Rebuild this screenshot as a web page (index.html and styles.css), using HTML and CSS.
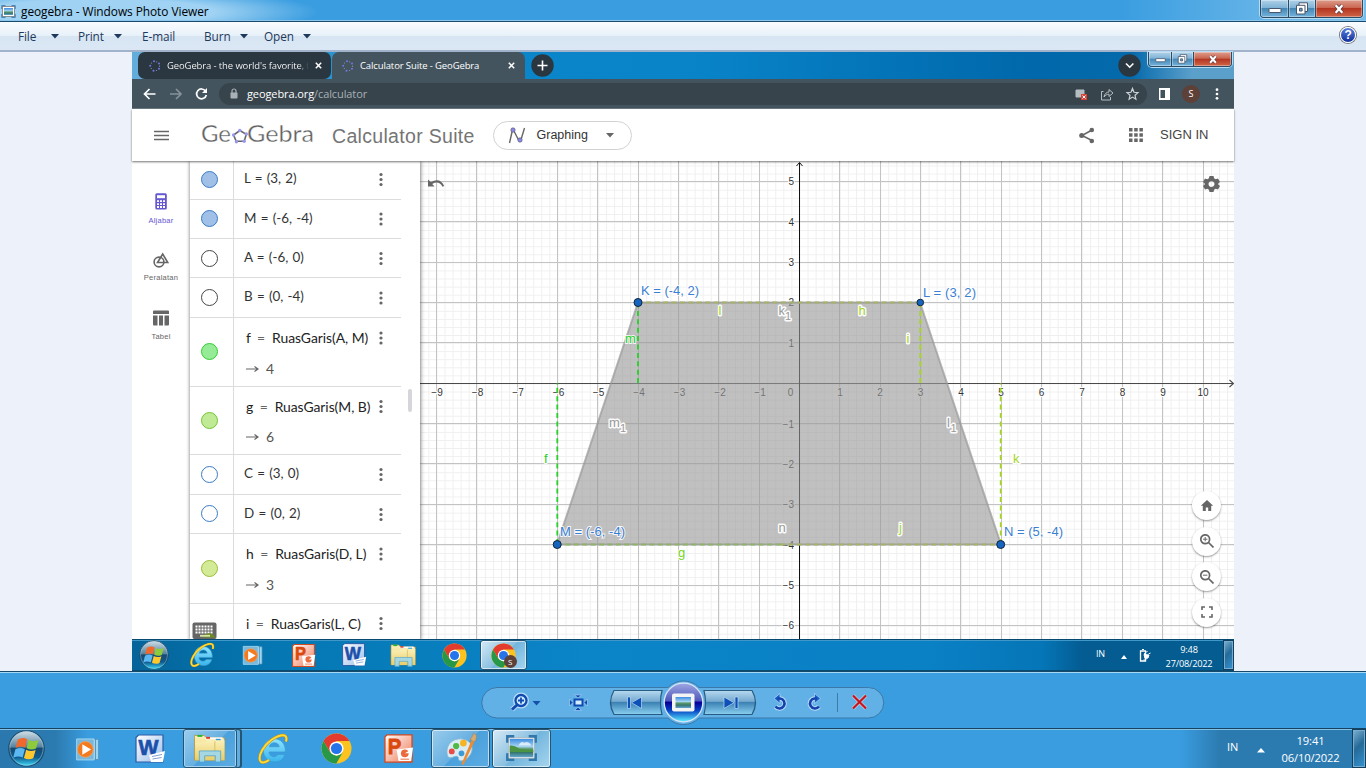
FILE: index.html
```html
<!DOCTYPE html>
<html lang="en">
<head>
<meta charset="utf-8">
<title>geogebra - Windows Photo Viewer</title>
<link rel="stylesheet" href="styles.css">
</head>
<body>
<svg class="defs" aria-hidden="true">
  <defs>
    <linearGradient id="orb" x1="0" y1="0" x2="0" y2="1"><stop offset="0" stop-color="#d5e1e8"/><stop offset=".45" stop-color="#58849f"/><stop offset=".5" stop-color="#164a72"/><stop offset=".75" stop-color="#0e5c90"/><stop offset="1" stop-color="#3fe0ff"/></linearGradient>
    <linearGradient id="folder" x1="0" y1="0" x2="0" y2="1"><stop offset="0" stop-color="#fbf0b8"/><stop offset="1" stop-color="#e9cd68"/></linearGradient>
    <linearGradient id="ieblue" x1="0" y1="0" x2="0" y2="1"><stop offset="0" stop-color="#8fe4ff"/><stop offset="1" stop-color="#38b4ec"/></linearGradient>
    <linearGradient id="sky" x1="0" y1="0" x2="0" y2="1"><stop offset="0" stop-color="#3d8ce0"/><stop offset=".42" stop-color="#a5d4f2"/><stop offset=".55" stop-color="#5d9a6a"/><stop offset=".75" stop-color="#37766e"/><stop offset="1" stop-color="#62a6d4"/></linearGradient>
    <linearGradient id="docw" x1="0" y1="0" x2="1" y2="1"><stop offset="0" stop-color="#fff"/><stop offset="1" stop-color="#9bbde9"/></linearGradient>
    <linearGradient id="docp" x1="0" y1="0" x2="1" y2="1"><stop offset="0" stop-color="#fff"/><stop offset="1" stop-color="#ef7a55"/></linearGradient>
    <linearGradient id="play" x1="0" y1="0" x2="0" y2="1"><stop offset="0" stop-color="#9ea8e2"/><stop offset=".45" stop-color="#5059bd"/><stop offset=".5" stop-color="#08009a"/><stop offset=".7" stop-color="#0540c4"/><stop offset="1" stop-color="#5ff2ff"/></linearGradient>
    <linearGradient id="navbtn" x1="0" y1="0" x2="0" y2="1"><stop offset="0" stop-color="#b6d9f0"/><stop offset=".45" stop-color="#76aacf"/><stop offset=".5" stop-color="#3d82b4"/><stop offset="1" stop-color="#8ad0f0"/></linearGradient>
  </defs>
</svg>
<svg class="symbols" aria-hidden="true">
  <symbol id="start" viewBox="0 0 36 36">
    <circle cx="18" cy="18" r="17.3" fill="url(#orb)" stroke="#1d4c6c"/><circle cx="18" cy="18" r="16.2" fill="none" stroke="#a9d3e8" stroke-opacity=".6" stroke-width=".8"/>
    <path d="M9.5 9.3q5-3 9.2-.3l-2 8.2q-4.500-2.300-9.200.2z" fill="#f0682b"/><path d="M20 9.600q4.500 2.600 9.600.1l-2.300 8.200q-4.700 2.200-9.100-.2z" fill="#8dcb3c"/>
    <path d="M7.200 18.800q4.600-2.500 9.200-.1l-2.200 8.100q-4.300-2.200-9.100.2z" fill="#5cb8f0"/><path d="M17.700 19.200q4.500 2.400 9.200.2l-2.300 8.100q-4.700 2.200-9.100-.3z" fill="#fdc82e"/>
  </symbol>
  <symbol id="wmp" viewBox="0 0 32 32">
    <path d="M21 5h7v23h-7z" fill="#9ed6ef" stroke="#5595bd"/><path d="M24.500 5v23" stroke="#4a86b0"/>
    <path d="M3 4.500h20v24H3z" fill="#78b8dd" stroke="#a8dcf3"/><circle cx="13" cy="16.500" r="9" fill="#f47a20" stroke="#f9a85f" stroke-width=".8"/><path d="M9.500 10.500v12l10-6z" fill="#fff"/>
  </symbol>
  <symbol id="word" viewBox="0 0 32 32">
    <path d="M2 4.500l2.500-2.500H29v27H2z" fill="url(#docw)" stroke="#2c5aa6" stroke-width="1.200"/>
    <text x="4.500" y="22" class="ico-letter" font-size="22" textLength="20" lengthAdjust="spacingAndGlyphs" fill="#1c50aa" stroke="#1c50aa" stroke-width=".7">W</text>
    <path d="M15 22l16-4-2 11H17z" fill="#fff"/><path d="M18 23.500l10-2M18.500 26l9-1.500" stroke="#7f9fd2"/>
  </symbol>
  <symbol id="ppt" viewBox="0 0 32 32">
    <path d="M2 4l2-2H30v28H2z" fill="url(#docp)" stroke="#d24a22" stroke-width="1.400"/>
    <text x="5" y="22" class="ico-letter" font-size="23" textLength="14" lengthAdjust="spacingAndGlyphs" fill="#d9480f" stroke="#d9480f" stroke-width=".8">P</text>
    <path d="M14 17l17-2-2 14H16z" fill="#fff"/><circle cx="22.500" cy="21" r="4" fill="#ea6a3d"/><path d="M22.500 21h5v-3z" fill="#fff"/><path d="M18 27h9" stroke="#e7683c"/>
  </symbol>
  <symbol id="explorer" viewBox="0 0 34 32">
    <path d="M1 5V2.500h10l2 2.500h19v23H1z" fill="url(#folder)" stroke="#b79337" stroke-width=".8"/><path d="M4 2h5v2H4z" fill="#20b53b"/><path d="M12 4.500h18v2H12z" fill="#fff"/><path d="M13 4h4v2h-4z" fill="#dd3b28"/><path d="M23 6h5v2h-5z" fill="#2c9ae0"/>
    <path d="M2 9.500h10l2-2h18V28H2z" fill="url(#folder)"/><path d="M22 8.500V28" stroke="#d9bf63"/>
    <path d="M6 18.500h22V30h-5.500v-6.500h-11V30H6z" fill="#9dd7ee" stroke="#4fa3cc" stroke-width=".8" fill-opacity=".9"/>
  </symbol>
  <symbol id="ie" viewBox="0 0 32 32">
    <path d="M27.400 19H11c.3 5.200 6.800 6 8.800 2.600h6.800C24.500 32.500 5 32 5.300 16.500 5.600 1.500 28.500 1.800 27.400 19z M11.300 13.800h9.900c-.8-5.300-8.700-5.300-9.900 0z" fill="url(#ieblue)" fill-rule="evenodd" stroke="#3a9ad0" stroke-width=".7"/>
    <path d="M28 8.500C30.500-.5 22 1.500 14 6.500 6 12 0 22 2 27.500c1.300 3.200 5.500 2 9-.5" fill="none" stroke="#c59111" stroke-width="2.800"/><path d="M28 8.500C30.500-.5 22 1.500 14 6.500 6 12 0 22 2 27.500c1.300 3.200 5.500 2 9-.5" fill="none" stroke="#fddc38" stroke-width="1.900"/>
  </symbol>
  <symbol id="chrome" viewBox="0 0 32 32">
    <circle cx="16" cy="16" r="15.500" fill="#fcc31e"/>
    <path d="M2.600 8.300A15.500 15.500 0 0 1 29.400 8.300H16v4L9.500 20z" fill="#e33b2e"/><path d="M2.600 8.300L9.300 19.800 16 23.700l6.400-3.500-6.600 11.300A15.500 15.500 0 0 1 2.600 8.300z" fill="#279847"/>
    <circle cx="16" cy="16" r="7.300" fill="#fff"/><circle cx="16" cy="16" r="5.800" fill="#2674ea"/>
  </symbol>
  <symbol id="paint" viewBox="0 0 34 34">
    <path d="M3 20C3 9 15 4 24 9c7 4 6 12 1 17-3 4-10 5-10 2s-1-4-6-2-6-2-6-6z" fill="#d8ecf5" stroke="#86b7d2"/><circle cx="8" cy="20" r="3" fill="#e84b43"/><circle cx="12.500" cy="14.500" r="3.200" fill="#4fb846"/><circle cx="20" cy="11.500" r="3.400" fill="#f7b321"/><circle cx="18" cy="22" r="3" fill="#3d9ad3"/>
    <path d="M18 33L29 7l3 1.500L20 34z" fill="#ee8b31"/><path d="M27.500 8c0-3 2-2 3-7l3 2.500c0 4-1 6-3 6.500z" fill="#d7aa72" stroke="#a97a42" stroke-width=".5"/>
  </symbol>
  <symbol id="viewer" viewBox="0 0 32 28">
    <path d="M1.500 8V1.500h7M23.500 1.500h7V8M30.500 19v6.500h-7M8.500 25.500h-7V19" fill="none" stroke="#2f78ae" stroke-width="3"/><path d="M2.800 3h26.400v21H2.800z" fill="#fff" stroke="#b0aca5" stroke-width=".7"/><path d="M3.800 4h24.400v19H3.800z" fill="url(#sky)"/><path d="M14 9q2-3 5-1 3-2 6 1l1 2H13z" fill="#fff" fill-opacity=".7"/><path d="M3.800 11q4.500-.5 10.500 3.500l13.900 1v2H3.800z" fill="#4b9443"/>
  </symbol>
  <symbol id="tri" viewBox="0 0 8 5"><path d="M0 0h8L4 4.500z" fill="#1e395b"/></symbol>
  <symbol id="ring" viewBox="0 0 12 12"><g fill="#7873e6"><circle cx="5" cy="1.300" r="1"/><circle cx="10" cy="3.500" r="1"/><circle cx="10" cy="8.800" r="1"/><circle cx="4.500" cy="10.800" r="1"/><circle cx="1.200" cy="5.800" r="1"/></g><g fill="#8e95a8"><circle cx="7.700" cy="1.800" r=".6"/><circle cx="10.500" cy="6.200" r=".6"/><circle cx="7.500" cy="10.500" r=".6"/><circle cx="2.300" cy="8.500" r=".6"/><circle cx="2.500" cy="3" r=".6"/></g></symbol>
  <symbol id="dots" viewBox="0 0 4 14"><circle cx="2" cy="2" r="1.600"/><circle cx="2" cy="7" r="1.600"/><circle cx="2" cy="12" r="1.600"/></symbol>
  <symbol id="min" viewBox="0 0 14 10"><rect x="1" y="4.500" width="12" height="4" rx=".6" fill="#fff" stroke="#46566b"/></symbol>
  <symbol id="restore" viewBox="0 0 14 13"><path d="M4 .8h8.500v8.700H4z" fill="#fff" stroke="#46566b"/><path d="M1.500 3.300H10V12H1.500z" fill="#fff" stroke="#46566b"/><path d="M4.500 6.300h2.600V9H4.500z" fill="#6fa0c4" stroke="#46566b"/></symbol>
  <symbol id="close" viewBox="0 0 14 12"><path d="M3 1.500l8 9M11 1.500l-8 9" stroke="#5a3b42" stroke-width="4.600"/><path d="M3 1.500l8 9M11 1.500l-8 9" stroke="#fff" stroke-width="2.800"/></symbol>
</svg>

<header class="titlebar">
  <svg class="title-icon" width="15" height="13"><path d="M1 4V.8h3.500M10.500.8H14V4M14 9v3.200h-3.500M4.500 12.200H1V9" fill="none" stroke="#2b6ea5" stroke-width="1.200"/><path d="M1.500 1.500h12v10h-12z" fill="#fff" stroke="#777" stroke-width=".8"/><path d="M3 3h9v7H3z" fill="url(#sky)"/></svg>
  <span class="title-text">geogebra - Windows Photo Viewer</span>
  <div class="winctl"><i class="wb wb-a"><svg width="14" height="10"><use href="#min"/></svg></i><i class="wb wb-b"><svg width="14" height="13"><use href="#restore"/></svg></i><i class="wb wb-c"><svg width="12" height="10"><use href="#close"/></svg></i></div>
</header>

<nav class="menubar">
  <span class="mi file">File<svg width="8" height="5"><use href="#tri"/></svg></span>
  <span class="mi print">Print<svg width="8" height="5"><use href="#tri"/></svg></span>
  <span class="mi mail">E-mail</span>
  <span class="mi burn">Burn<svg width="8" height="5"><use href="#tri"/></svg></span>
  <span class="mi open">Open<svg width="8" height="5"><use href="#tri"/></svg></span>
  <span class="help">?</span>
</nav>

<main class="stage">
  <section class="photo">
    <div class="tabs">
      <div class="tab tab-1"><svg width="12" height="12"><use href="#ring"/></svg><span class="tt t1">GeoGebra - the world's favorite, f</span><svg class="tx" width="7" height="7"><path d="M.8.8l5.400 5.400M6.200.8L.8 6.200"/></svg></div>
      <div class="tab tab-2"><svg width="12" height="12"><use href="#ring"/></svg><span class="tt t2">Calculator Suite - GeoGebra</span><svg class="tx" width="7" height="7"><path d="M.8.8l5.400 5.400M6.200.8L.8 6.200"/></svg></div>
      <svg class="plus" width="23" height="23"><circle cx="11.500" cy="11.500" r="11.200" fill="#2b3740"/><path d="M6.500 11.500h10M11.500 6.500v10" stroke="#fff" stroke-width="1.600"/></svg>
      <svg class="chev" width="23" height="23"><circle cx="11.500" cy="11.500" r="11.200" fill="#2b3740"/><path d="M8 9.500l3.700 3.700 3.700-3.700" fill="none" stroke="#fff" stroke-width="1.600"/></svg>
      <div class="winctl small"><i class="wb wb-a"><svg width="11" height="8"><use href="#min"/></svg></i><i class="wb wb-b"><svg width="11" height="10"><use href="#restore"/></svg></i><i class="wb wb-c"><svg width="10" height="9"><use href="#close"/></svg></i></div>
    </div>

    <div class="toolbar">
      <svg class="navs" width="86" height="30" fill="none" stroke-width="1.700"><path d="M23.500 15H13M17.500 10l-5 5 5 5" stroke="#fff"/><path d="M38 15h10.500M44 10l5 5-5 5" stroke="#85929a"/><path d="M73.500 12a4.900 4.900 0 1 0 .8 4" stroke="#fff"/><path d="M75 9v5h-5z" fill="#fff"/></svg>
      <div class="address">
        <svg width="8" height="11"><path d="M2 5V3a2 2 0 0 1 4 0v2" fill="none" stroke="#a9b1b6" stroke-width="1.200"/><rect x=".5" y="4.500" width="7" height="6" rx=".8" fill="#a9b1b6"/></svg>
        <span class="url">geogebra.org<span>/calculator</span></span>
        <svg class="addr-icons" width="66" height="16" fill="none" stroke="#b4bdc2"><path d="M1 4h8v7H1z" fill="#b4bdc2"/><rect x="6" y="8" width="6" height="6" fill="#d94235" stroke="none"/><path d="M7.500 9.500l3 3M10.500 9.500l-3 3" stroke="#fff"/><path d="M28.500 5.500h-2v8.500h9v-3M29 11c.5-3.500 3-5 5-5V3.500l4 3.500-4 3.500V8.200c-2 0-3.500.8-5 2.800z"/><path d="M57.500 2.500l1.500 3.800 4 .3-3 2.700.9 4-3.400-2.200-3.400 2.200.9-4-3-2.700 4-.3z" stroke-width="1.200" stroke="#ccd3d6"/></svg>
      </div>
      <svg class="panel-ico" width="11" height="12"><path d="M0 0h11v12H0z" fill="#fff"/><path d="M1.500 2h4.500v8H1.500z" fill="#43535d"/></svg>
      <span class="avatar">S</span>
      <svg class="kebab-w" width="4" height="12" fill="#fff"><use href="#dots"/></svg>
    </div>

    <div class="apphead">
      <svg class="burger" width="15" height="11"><path d="M0 1.500h15M0 5.500h15M0 9.500h15" stroke="#666" stroke-width="1.300"/></svg>
      <svg class="logo" width="114" height="36"><g class="logo-text"><text x="0" y="25" textLength="30" lengthAdjust="spacingAndGlyphs">Ge</text><text x="46" y="25" textLength="67" lengthAdjust="spacingAndGlyphs">Gebra</text></g><path d="M38.800 13.500L45.300 17.300 43.200 24.200H35.200L32.600 18z" fill="none" stroke="#666" stroke-width="1.600"/><g fill="#9a96f2"><circle cx="38.800" cy="13.500" r="1.700"/><circle cx="45.300" cy="17" r="1.700"/><circle cx="43.200" cy="24.200" r="1.700"/><circle cx="35.400" cy="24.700" r="1.700"/><circle cx="32.600" cy="18" r="1.700"/></g></svg>
      <span class="suite">Calculator Suite</span>
      <span class="pill"><svg width="18" height="17"><path d="M1.500 16L4 5Q5 1 6.500 5l3.500 7q2 4 3.500-1L16.500 1" fill="none" stroke="#666" stroke-width="1.400"/><circle cx="5" cy="3" r="2.200" fill="#8a87f2" stroke="#555" stroke-width=".6"/><circle cx="12" cy="13" r="2.200" fill="#8a87f2" stroke="#555" stroke-width=".6"/></svg><b>Graphing</b><svg class="car" width="8" height="5"><path d="M0 0h8L4 4.500z" fill="#666"/></svg></span>
      <svg class="share" width="16" height="17" fill="#666"><path d="M13 3L3 8.500l10 5" fill="none" stroke="#666" stroke-width="1.500"/><circle cx="12.800" cy="3" r="2.300"/><circle cx="2.700" cy="8.500" r="2.500"/><circle cx="12.800" cy="14" r="2.300"/></svg>
      <svg class="apps" width="14" height="14"><path d="M0 1.800h14M0 7h14M0 12.200h14" stroke="#666" stroke-width="3.400" stroke-dasharray="3.500 1.700"/></svg>
      <span class="signin">SIGN IN</span>
    </div>

    <div class="work">
      <aside class="rail">
        <div class="ri active"><svg width="12" height="17"><rect x=".3" y=".3" width="11.500" height="16.200" rx="1.500" fill="#6557d2"/><path d="M2 2.200h8v3H2z" fill="#fff"/><path d="M2 8.200h8M2 11.200h8M2 14h8" stroke="#fff" stroke-width="1.800" stroke-dasharray="2 1"/></svg><span>Aljabar</span></div>
        <div class="ri"><svg width="16" height="16" fill="none" stroke="#666" stroke-width="1.600"><circle cx="6" cy="10" r="4.900"/><path d="M9.700 2L4.500 10.500h10.300z"/></svg><span>Peralatan</span></div>
        <div class="ri"><svg width="16" height="16" fill="#666"><path d="M0 1.500Q0 .5 1 .5h14q1 0 1 1V4H0zM0 5.500h4.500v10H1q-1 0-1-1zM6 5.500h4v10H6zM11.500 5.500H16v9q0 1-1 1h-3.500z"/></svg><span>Tabel</span></div>
      </aside>
      <section class="algebra">
        <div class="row first"><div class="mb"><i class="m blue"></i></div><p>L = (3, 2)</p></div>
        <div class="row"><div class="mb"><i class="m blue"></i></div><p>M = (-6, -4)</p></div>
        <div class="row"><div class="mb"><i class="m"></i></div><p>A = (-6, 0)</p></div>
        <div class="row"><div class="mb"><i class="m"></i></div><p>B = (0, -4)</p></div>
        <div class="row tall"><div class="mb"><i class="m g1"></i></div><div class="def"><p>f <u>=</u> RuasGaris(A, M)</p><p class="res"><svg width="13" height="6"><path d="M0 3h11M8.500.5L12 3 8.500 5.500" fill="none" stroke="#666" stroke-width="1.200"/></svg>4</p></div></div>
        <div class="row tall"><div class="mb"><i class="m g2"></i></div><div class="def"><p>g <u>=</u> RuasGaris(M, B)</p><p class="res"><svg width="13" height="6"><path d="M0 3h11M8.500.5L12 3 8.500 5.500" fill="none" stroke="#666" stroke-width="1.200"/></svg>6</p></div></div>
        <div class="row"><div class="mb"><i class="m ob"></i></div><p>C = (3, 0)</p></div>
        <div class="row"><div class="mb"><i class="m ob"></i></div><p>D = (0, 2)</p></div>
        <div class="row tall h"><div class="mb"><i class="m g3"></i></div><div class="def"><p>h <u>=</u> RuasGaris(D, L)</p><p class="res"><svg width="13" height="6"><path d="M0 3h11M8.500.5L12 3 8.500 5.500" fill="none" stroke="#666" stroke-width="1.200"/></svg>3</p></div></div>
        <div class="row last"><div class="mb"></div><div class="def"><p>i <u>=</u> RuasGaris(L, C)</p></div></div>
        <svg class="kebabs" width="4" height="478" viewBox="379 161 4 478" fill="#666"><use href="#dots" x="379" y="172.500" width="4" height="14"/><use href="#dots" x="379" y="212" width="4" height="14"/><use href="#dots" x="379" y="251.500" width="4" height="14"/><use href="#dots" x="379" y="291" width="4" height="14"/><use href="#dots" x="379" y="331" width="4" height="14"/><use href="#dots" x="379" y="399.500" width="4" height="14"/><use href="#dots" x="379" y="467.500" width="4" height="14"/><use href="#dots" x="379" y="507.500" width="4" height="14"/><use href="#dots" x="379" y="547" width="4" height="14"/><use href="#dots" x="379" y="616.500" width="4" height="14"/></svg>
        <i class="thumb"></i>
        <svg class="keyboard" width="25" height="17"><rect x=".5" y=".5" width="24" height="16.500" rx="2" fill="#666"/><path d="M3.500 4.500h18M3.500 7.500h18M3.500 10.500h18" stroke="#fff" stroke-width="2" stroke-dasharray="2 1"/><path d="M10 15.500q7-8.500 14 0z" fill="#6d8c28"/><path d="M8 13.800h10" stroke="#d5e5a5" stroke-width="1.800"/></svg>
      </section>

      <div class="graph">
        <svg class="plot" width="814" height="478" viewBox="420 161 814 478">
          <defs><pattern id="minor" width="8.068" height="8.072" x="799.500" y="383.500" patternUnits="userSpaceOnUse"><path d="M0 .5h8.100M.5 0v8.100" stroke="#efefef" fill="none"/></pattern></defs>
          <path d="M420 161h814v478H420z" fill="#fff"/><path d="M420 161h814v478H420z" fill="url(#minor)"/>
          <path d="M436.500 161v478M476.500 161v478M517.500 161v478M557.500 161v478M597.500 161v478M638.500 161v478M678.500 161v478M718.500 161v478M759.500 161v478M839.500 161v478M880.500 161v478M920.500 161v478M960.500 161v478M1001.500 161v478M1041.500 161v478M1081.500 161v478M1122.500 161v478M1162.500 161v478M1203.500 161v478M420 181.500h814M420 221.500h814M420 262.500h814M420 302.500h814M420 342.500h814M420 423.500h814M420 463.500h814M420 504.500h814M420 544.500h814M420 585.500h814M420 625.500h814" stroke="#c3c3c3"/>
          <path d="M420 383.500h813M1229.500 380l4 3.500-4 3.500" stroke="#4a4a4a" fill="none" stroke-width="1.100"/><path d="M799.500 639V163M796.500 166l3-3.500 3 3.500" stroke="#111" fill="none"/>
          <g class="ticks" text-anchor="middle">
            <text x="437" y="396">−9</text><text x="477.500" y="396">−8</text><text x="518" y="396">−7</text><text x="558.500" y="396">−6</text><text x="598.500" y="396">−5</text><text x="639" y="396">−4</text><text x="679.500" y="396">−3</text><text x="720" y="396">−2</text><text x="760" y="396">−1</text><text x="790.500" y="396">0</text><text x="840" y="396">1</text><text x="880" y="396">2</text><text x="920.500" y="396">3</text><text x="961" y="396">4</text><text x="1001" y="396">5</text><text x="1041.500" y="396">6</text><text x="1082" y="396">7</text><text x="1122.500" y="396">8</text><text x="1163" y="396">9</text><text x="1203" y="396">10</text>
          </g>
          <g class="ticks" text-anchor="end"><text x="794" y="185">5</text><text x="794" y="225.500">4</text><text x="794" y="266">3</text><text x="794" y="306">2</text><text x="794" y="346.500">1</text><text x="794" y="427.500">−1</text><text x="794" y="467.500">−2</text><text x="794" y="508">−3</text><text x="794" y="548.500">−4</text><text x="794" y="588.500">−5</text><text x="794" y="629">−6</text></g>
          <path d="M638 302.500H920L1001 544.500H557z" fill="#999" fill-opacity=".62" stroke="#999" stroke-opacity=".7" stroke-width="2"/>
          <g fill="none" stroke-width="1.800" stroke-dasharray="5 3.400"><path d="M557.300 544V383.500M638 302.500v81" stroke="#28cf28"/><path d="M920.300 302.500v81M1000.700 544V383.500" stroke="#a5d51c"/><path d="M638 302.500h282M780 544.500h220" stroke="#a6b268"/><path d="M557 544.500h224" stroke="#8fb467"/></g>
          <g fill="#1565c0" stroke="#10233b"><circle cx="638" cy="302.500" r="4"/><circle cx="920.300" cy="302.500" r="3.300"/><circle cx="557.200" cy="544.500" r="4"/><circle cx="1000.700" cy="544.500" r="4"/></g>
          <g class="lab" fill="#3b7fd2"><text x="641" y="294.500" textLength="58">K = (-4, 2)</text><text x="923" y="296.500" textLength="53">L = (3, 2)</text><text x="560" y="535.800" textLength="65">M = (-6, -4)</text><text x="1004" y="535.800" textLength="59">N = (5, -4)</text></g>
          <g class="lab" fill="#28cf28"><text x="544" y="463">f</text><text x="625" y="342.500">m</text><text x="678" y="556.500" fill="#74d51e">g</text></g>
          <g class="lab halo" fill="#a5d51c"><text x="718.500" y="315">l</text><text x="858.500" y="315">h</text><text x="906.500" y="342.500">i</text><text x="1013" y="463">k</text><text x="899" y="531.500">j</text></g>
          <g class="lab halo" fill="#999"><text x="778.500" y="315">k</text><text x="785" y="320" font-size="11">1</text><text x="609" y="427">m</text><text x="620" y="432" font-size="11">1</text><text x="947" y="427">l</text><text x="950.500" y="432" font-size="11">1</text><text x="778.500" y="531.500">n</text></g>
          <path d="M428 179.500v7h6.500l-2.300-2.400q6.500-4 10.300 2.700l1.700-.7q-4-9-13.400-4z" fill="#666"/>
          <path d="M1209.500 176h4l.6 2.300 1.600.9 2.300-.7 2 3.400-1.700 1.600v1l1.700 1.600-2 3.400-2.300-.7-1.600.9-.6 2.300h-4l-.6-2.300-1.600-.9-2.300.7-2-3.400 1.700-1.600v-1l-1.700-1.600 2-3.400 2.300.7 1.600-.9zM1211.500 181a3 3 0 1 0 .01 0z" fill="#666" fill-rule="evenodd"/>
        </svg>
        <div class="fabs">
          <span><svg width="14" height="14"><path d="M7 1L.8 6.800h2V12h3V8.500h2.400V12h3V6.800h2z" fill="#666"/></svg></span>
          <span><svg width="14" height="14" fill="none" stroke="#666" stroke-width="1.700"><circle cx="5.200" cy="5.200" r="4.400"/><path d="M8.500 8.500l5 5"/><path d="M3 5.200h4.400M5.200 3v4.400" stroke-width="1"/></svg></span>
          <span><svg width="14" height="14" fill="none" stroke="#666" stroke-width="1.700"><circle cx="5.200" cy="5.200" r="4.400"/><path d="M8.500 8.500l5 5"/><path d="M3 5.200h4.400" stroke-width="1"/></svg></span>
          <span><svg width="12" height="12" fill="none" stroke="#666" stroke-width="1.600"><path d="M1 4V1h3M8 1h3v3M11 8v3H8M4 11H1V8"/></svg></span>
        </div>
      </div>
    </div>

    <div class="task inner">
      <div class="tc st"><svg width="30" height="30"><use href="#start"/></svg></div>
      <div class="tc"><svg width="26" height="26"><use href="#ie"/></svg></div>
      <div class="tc"><svg width="24" height="24"><use href="#wmp"/></svg></div>
      <div class="tc"><svg width="25" height="25"><use href="#ppt"/></svg></div>
      <div class="tc"><svg width="26" height="26"><use href="#word"/></svg></div>
      <div class="tc"><svg width="27" height="25"><use href="#explorer"/></svg></div>
      <div class="tc"><svg width="25" height="25"><use href="#chrome"/></svg></div>
      <div class="tc on"><svg width="25" height="25"><use href="#chrome"/></svg><em>S</em></div>
      <div class="tray"><span class="lang">IN</span><svg class="up" width="6" height="4"><path d="M0 4h6L3 0z" fill="#fff"/></svg><svg class="plug" width="12" height="13"><path d="M1.500 2h5v10h-5z" fill="none" stroke="#fff" stroke-width="1.300"/><path d="M3 .5h2" stroke="#fff"/><path d="M5 5l2-1.500L8.500 2M9.500 5L11.500 4M5 5.500l5 .5-1 3-3 .5z" fill="#fff" stroke="#fff"/><path d="M7 9.500q.5 2.500-2.500 1.500" fill="none" stroke="#fff"/></svg><span class="clock">9:48<br>27/08/2022</span><i class="peek"></i></div>
    </div>
  </section>
</main>

<section class="controls">
  <svg width="404" height="50" viewBox="481 678 404 50">
    <path d="M497 687.500h171a21.500 21.500 0 0 1 31 0h169.500a15.200 15.200 0 0 1 0 30.500H699a21.500 21.500 0 0 1-31 0H497a15.200 15.200 0 0 1 0-30.500z" fill="#fff" fill-opacity=".2" stroke="#3c79a8"/>
    <path d="M614 690.500h48q-3 12 0 24h-48q-7-12 0-24zM704 690.500h48q7 12 0 24h-48q3-12 0-24z" fill="url(#navbtn)" stroke="#285c82" stroke-width="1.200"/>
    <circle cx="683.500" cy="702.500" r="20.500" fill="#6fb4e5"/><circle cx="683.500" cy="702.500" r="19.300" fill="url(#play)" stroke="#d7e6fa" stroke-width="1.300"/>
    <rect x="672" y="693.500" width="22.500" height="18" rx="2" fill="#f4f4f4"/><path d="M675.500 697h15.500v11h-15.500z" fill="url(#sky)"/>
    <g fill="#0e4fb8" stroke="#b9dcf5" stroke-width=".7"><path d="M627.500 697h3v11.500h-3zM641.500 697v11.500l-10-5.800zM724 697v11.500l10-5.800zM735 697h3v11.500h-3z"/></g>
    <g fill="none" stroke="#b8dbf5" stroke-width="5"><circle cx="521" cy="700.500" r="5.500"/><path d="M517 705l-5 4.500"/></g>
    <g fill="none" stroke="#104bb0" stroke-width="2.300"><circle cx="521" cy="700.500" r="5.500" fill="#d2edff"/><path d="M517 705l-5 4.500" stroke-width="3"/><path d="M518 700.500h6M521 697.500v6" stroke-width="1.800"/></g><path d="M532.500 701h8l-4 4.500z" fill="#1550a8"/>
    <g fill="#104bb0" stroke="#b8dbf5" stroke-width=".6"><path d="M574.500 695h7l-3.500 3zM574.500 710.500h7l-3.500-3.500zM569.500 699v7l3.500-3.500zM587.500 699v7l-3.500-3.500z"/></g><path d="M574.500 699.500h8v6h-8z" fill="#d2edff" stroke="#104bb0" stroke-width="2"/>
    <g fill="none" stroke="#b8dbf5" stroke-width="4.600"><path d="M775.500 706.500a5 5 0 1 0 4.500-8h-2.500M819 706.500a5 5 0 1 1-4.500-8h2.500"/></g><path d="M774 698.500l6-5v10zM820.500 698.500l-6-5v10z" fill="#1560c8" stroke="#b8dbf5" stroke-width=".7"/><g fill="none" stroke="#1642ad" stroke-width="2.600"><path d="M775.500 706.500a5 5 0 1 0 4.500-8h-2.500M819 706.500a5 5 0 1 1-4.500-8h2.500"/></g>
    <path d="M837.500 693v19" stroke="#3d7baa"/><path d="M853 695.500l13 13M866 695.500l-13 13" stroke="#b7d3e5" stroke-width="3.600"/><path d="M853 695.500l13 13M866 695.500l-13 13" stroke="#c9131e" stroke-width="2.200"/>
  </svg>
</section>

<footer class="task outer">
  <div class="tc st"><svg width="37" height="37"><use href="#start"/></svg></div>
  <div class="tc"><svg width="28" height="28"><use href="#wmp"/></svg></div>
  <div class="tc"><svg width="32" height="32"><use href="#word"/></svg></div>
  <div class="tc on dim stack"><svg width="34" height="31"><use href="#explorer"/></svg></div>
  <div class="tc"><svg width="32" height="32"><use href="#ie"/></svg></div>
  <div class="tc"><svg width="31" height="31"><use href="#chrome"/></svg></div>
  <div class="tc"><svg width="31" height="31"><use href="#ppt"/></svg></div>
  <div class="tc on dim"><svg width="33" height="33"><use href="#paint"/></svg></div>
  <div class="tc on"><svg width="31" height="27"><use href="#viewer"/></svg></div>
  <div class="tray"><span class="lang">IN</span><svg class="up" width="8" height="5"><path d="M0 4.500h8L4 0z" fill="#fff"/></svg><span class="clock">19:41<br>06/10/2022</span><i class="peek"></i></div>
</footer>
</body>
</html>
```
FILE: styles.css
```css
* { box-sizing: border-box; }
body { margin: 0; width: 1366px; height: 768px; overflow: hidden; display: grid; grid-template-rows: 22px 30px 619px 57px 40px; background: #3a9de0; font-family: "Open Sans", "Noto Sans", sans-serif; }
svg { flex: none; display: block; }
p { margin: 0; }
i, em { font-style: normal; }
.defs { position: absolute; width: 0; height: 0; }
.symbols { display: none; }
.ico-letter { font-family: "Liberation Sans", Arial, sans-serif; font-weight: 700; }

/* Window frame */
.titlebar { display: flex; align-items: flex-start; background: radial-gradient(ellipse 230px 26px at 100px 12px, #9fd2f3 50%, transparent 95%), linear-gradient(90deg, #3a9de0 82%, #76bdea 97%); border-bottom: 1px solid #1c4a6b; box-shadow: inset 0 -1px #8ac6ee; }
.title-icon { margin: 5px 0 0 1px; }
.title-text { font-size: 11.900px; line-height: 16px; margin: 3px 0 0 5px; color: #000; letter-spacing: -.06px; white-space: nowrap; }
.winctl { display: flex; margin: 0 3px 0 auto; width: 103px; height: 18px; border: 1px solid #2c4a63; border-top: 0; border-radius: 0 0 4px 4px; overflow: hidden; box-shadow: 0 0 0 1px #b6dcf4; }
.wb { display: flex; align-items: center; justify-content: center; background: linear-gradient(#b0d2e9, #7fb2d6 45%, #4587b5 50%, #74b3dc); border-right: 1px solid #2c4a63; box-shadow: inset 0 0 0 1px rgba(255,255,255,.35); }
.wb-a { width: 28px; } .wb-b { width: 27px; }
.wb-c { flex: 1; border: 0; background: linear-gradient(#dd9c8c, #c96650 45%, #b43520 50%, #cf6648); }
.small { width: 84px; height: 15px; }
.small .wb-a { width: 23px; } .small .wb-b { width: 22px; }

.menubar { display: flex; align-items: center; padding-left: 18px; font-size: 11.800px; color: #1e395b; background: linear-gradient(#f9fcfe, #e8f1f9 48%, #d7e5f2 50%, #dbe7f4); border: solid #a1b2cb; border-width: 0 0 2px; letter-spacing: -.1px; }
.mi { display: flex; align-items: center; justify-content: space-between; white-space: nowrap; }
.file { width: 41px; margin-right: 19px; } .print { width: 44px; margin-right: 20px; } .mail { width: 62px; } .burn { width: 44px; margin-right: 16px; } .open { width: 47px; }
.help { margin: -3px 10px 0 auto; width: 16px; height: 16px; border-radius: 50%; background: linear-gradient(#5b80dc, #10309c); border: 1px solid #fff; box-shadow: 0 0 0 1px #777; color: #fff; font: 700 12px/14px "Liberation Sans", Arial, sans-serif; text-align: center; }

.stage { background: #edf2fa; padding-left: 132px; }
.photo { width: 1102px; height: 619px; display: grid; grid-template-rows: 27px 30px 52px 478px 32px; background: #fff; }

/* Browser */
.tabs { display: flex; background: linear-gradient(90deg, #62addb 0 6px, #0b86c9 300px, #0984c9 560px, #0068ab 900px, #056aab 1000px, #5b9fcb 1060px); color: #fff; }
.tab { display: flex; align-items: center; width: 193px; border-radius: 7px 7px 0 0; padding-left: 10px; }
.tab-1 { margin-left: 6px; background: #2b3740; border-radius: 7px; padding-left: 11px; } .tab-2 { background: #43545e; margin-left: 1px; padding-left: 10px; }
.tt { font-size: 9.500px; letter-spacing: -.12px; margin-left: 6px; width: 141px; overflow: hidden; white-space: nowrap; }
.t1 { background: linear-gradient(90deg, #fff 93%, #46535b 99%); -webkit-background-clip: text; color: transparent; }
.tx { margin-left: 7px; fill: none; stroke: #fff; stroke-width: 1.500; }
.plus { margin: 2px 0 0 6px; } .chev { margin: 2px 7px 0 auto; }
.tabs .winctl { margin: 0 2px 0 0; }
.toolbar { display: flex; align-items: center; background: #43545e; border-bottom: 1px solid #6c7b85; }
.address { display: flex; align-items: center; width: 928px; height: 22px; margin-left: 1px; padding-left: 11px; background: #37444c; border-radius: 11px; }
.url { font-size: 11px; letter-spacing: -.1px; margin-left: 9px; color: #fff; } .url span { color: #a7b0b5; }
.addr-icons { margin-left: auto; margin-right: 6px; }
.panel-ico { margin-left: 12px; }
.avatar { width: 18px; height: 18px; margin-left: 12px; border-radius: 50%; background: #5d4037; color: #fff; font-size: 9px; line-height: 18px; text-align: center; }
.kebab-w { margin-left: 15px; }

/* Application header */
.apphead { display: flex; align-items: center; position: relative; background: #fff; font-family: "Liberation Sans", Arial, sans-serif; box-shadow: 0 1px 2px rgba(0,0,0,.55); z-index: 2; }
.burger { margin-left: 21.500px; } .logo { margin-left: 32.500px; }
.logo-text { font-family: Lato, sans-serif; font-size: 23px; fill: #606060; stroke: #fff; stroke-width: .35px; }
.suite { margin: 2px 0 0 17px; width: 143px; font-size: 19.500px; letter-spacing: .32px; color: #757575; white-space: nowrap; }
.pill { display: flex; align-items: center; margin-left: 18px; width: 139px; height: 29px; padding-left: 14px; border: 1px solid #d2d2d2; border-radius: 15px; }
.pill b { font-weight: 400; font-size: 12.500px; color: #333; width: 69px; margin-left: 10.500px; } .car { margin-top: 1px; }
.share { margin-left: 447px; } .apps { margin-left: 33.500px; }
.signin { margin: -2px 0 0 17.500px; font-size: 13px; color: #444; }

.work { display: grid; grid-template-columns: 58px 230px 814px; height: 478px; overflow: hidden; }
.rail { padding-top: 32px; }
.ri { display: flex; flex-direction: column; align-items: center; height: 58.500px; font: 7.500px/10px "Liberation Sans", Arial, sans-serif; color: #666; letter-spacing: .25px; }
.ri span { margin-top: 5.500px; } .active { color: #6557d2; }
.algebra { position: relative; z-index: 1; box-shadow: -1px 0 3px rgba(0,0,0,.22), 1px 0 4px rgba(0,0,0,.4); background: #fff; font-family: Lato, sans-serif; font-size: 13.400px; color: #222; }
.row { display: flex; height: 39.450px; width: 211px; border-bottom: 1px solid #dcdcdc; }
.row > p { padding-left: 10px; line-height: 37.500px; white-space: nowrap; color: #333; word-spacing: .8px; }
.first { height: 38.600px; } .first > p { line-height: 35px; } .tall { height: 68.700px; } .h { height: 69.500px; } .last { height: 36px; border: 0; }
.mb { width: 44px; border-right: 1px solid #dcdcdc; display: flex; align-items: center; padding-left: 11px; }
.first .mb { align-items: flex-start; padding-top: 10px; }
.m { width: 17px; height: 17px; border-radius: 50%; border: 1px solid #444; }
.blue { background: #a1c0e8; border-color: #397bc5; } .ob { border-color: #397bc5; } .g1 { background: #96eb96; border-color: #35cb35; } .g2 { background: #c0ea95; border-color: #74c532; } .g3 { background: #d3eb96; border-color: #9bbc38; }
.def { padding: 9.200px 0 0 12px; white-space: nowrap; line-height: 22px; font-size: 13.900px; letter-spacing: -.05px; } .def u { text-decoration: none; margin: 0 3.500px 0 3px; color: #666; }
.res { display: flex; align-items: center; gap: 7px; margin-top: 8.500px; color: #555; }
.kebabs { position: absolute; left: 189px; top: 0; }
.thumb { position: absolute; right: 8px; top: 228px; width: 4px; height: 23px; border-radius: 2px; background: #d4d6da; }
.keyboard { position: absolute; left: 2px; bottom: 1px; }

.graph { position: relative; }
.ticks { font: 10px "Liberation Sans", Arial, sans-serif; fill: #333; stroke: #fff; stroke-width: 2px; paint-order: stroke; }
.lab { font-family: "Liberation Sans", Arial, sans-serif; font-size: 13px; stroke: #fff; stroke-width: 2px; stroke-opacity: .85; paint-order: stroke; }
.halo { stroke-width: 3px; stroke-opacity: .95; stroke-linejoin: round; }
.fabs { position: absolute; right: 13px; top: 330px; display: grid; gap: 6.500px; }
.fabs span { width: 29px; height: 29px; border-radius: 50%; background: #fff; display: flex; align-items: center; justify-content: center; box-shadow: 0 1px 2px rgba(0,0,0,.4); }

/* Bars at the bottom */
.task { display: flex; align-items: stretch; color: #fff; }
.tc { position: relative; display: flex; align-items: center; justify-content: center; width: 50.200px; }
.inner { background: linear-gradient(90deg, #05649a, #0578b3 150px, #0b84c8 450px, #0a80c5 800px, #0576b7 910px, #045c92 950px, #045c90); border-top: 1px solid #064a72; border-bottom: 1px solid #064a72; box-shadow: inset 0 1px #4198c8; }
.inner .st { width: 46px; padding-right: 3px; }
.on { border: 1px solid #255572; border-radius: 3px; background: linear-gradient(135deg, #d6eaf6, #89bfe0 50%, #73b5dd 52%, #a5d5ef); box-shadow: inset 0 0 0 1px rgba(255,255,255,.6); }
.inner .on { width: 47px; margin-left: .5px; }
.on em { position: absolute; right: 9px; bottom: 1px; width: 13px; height: 13px; border-radius: 50%; background: #5d4037; font-size: 8px; line-height: 13px; text-align: center; }
.tray { display: flex; align-items: center; margin-left: auto; font-size: 9.200px; line-height: 14px; letter-spacing: -.2px; }
.clock { text-align: center; white-space: nowrap; } .up { margin-top: 3px; }
.inner .lang { width: 24px; font-size: 9px; margin: -3px 1px 0 0; } .plug { margin-left: 12px; } .inner .clock { margin: 3px 1px 0 14px; width: 48px; }
.peek { align-self: stretch; border: 1px solid #123f5d; background: linear-gradient(135deg, #7fb2d2, #256a98 45%, #3593d0); box-shadow: inset 0 0 0 1px #75add2; }
.inner .peek { width: 11px; margin-left: 9px; }

.controls { display: flex; justify-content: center; align-items: flex-start; padding: 6px 1px 0 0; background: #3a9de0; border-top: 1px solid #17496b; box-shadow: inset 0 1px #a8d7f4; }
.outer { background: linear-gradient(90deg, #2a78ad, #2c7bb0 56px, #3a9de0 88px, #3a9de0 1180px, #2c7bb0 1220px, #2c7bb0); border-top: 1px solid #16435f; box-shadow: inset 0 1px #83c1e9; }
.outer .tc { width: 62.200px; } .outer .st { width: 57px; padding-right: 4px; }
.outer .on { width: 59px; margin: 0 1.500px 0 .8px; } .outer .dim { background: linear-gradient(135deg, #9accec, #67b0e1 50%, #4ba1dc 52%, #5cace2); }
.outer .stack { width: 54px; margin: 0 6.300px 0 1.500px; box-shadow: inset 0 0 0 1px #a3d1ef, 4px 0 0 -1px #62ade0, 5px 0 #255572; }
.outer .tray { font-size: 11.200px; line-height: 17px; letter-spacing: -.15px; }
.outer .lang { width: 29px; font-size: 11px; margin: -4px 1px 0 0; } .outer .clock { margin-left: 16px; width: 59px; } .outer .peek { width: 14px; margin-left: 12px; }
```
